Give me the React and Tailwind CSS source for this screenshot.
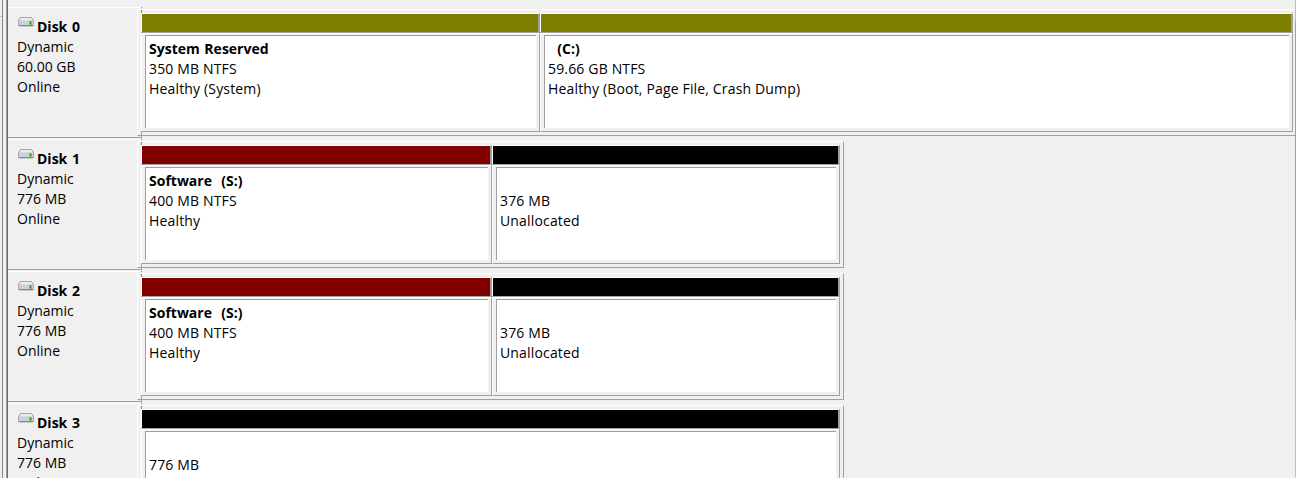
const disks = [
  { name: 'Disk 0', size: '60.00 GB', outer: 'w-[1159px]', parts: [
    { w: 'w-[399px]', bar: 'bg-[#808000]', lines: ['System Reserved', '350 MB NTFS', 'Healthy (System)'] },
    { w: 'w-[753px]', bar: 'bg-[#808000]', lines: ['\u00a0 (C:)', '59.66 GB NTFS', 'Healthy (Boot, Page File, Crash Dump)'] },
  ] },
  { name: 'Disk 1', size: '776 MB', outer: 'w-[707px]', parts: [
    { w: 'w-[351px]', bar: 'bg-[#800000]', lines: ['Software\u00a0 (S:)', '400 MB NTFS', 'Healthy'] },
    { w: 'w-[348px]', bar: 'bg-black', lines: ['', '376 MB', 'Unallocated'] },
  ] },
  { name: 'Disk 2', size: '776 MB', outer: 'w-[707px]', parts: [
    { w: 'w-[351px]', bar: 'bg-[#800000]', lines: ['Software\u00a0 (S:)', '400 MB NTFS', 'Healthy'] },
    { w: 'w-[348px]', bar: 'bg-black', lines: ['', '376 MB', 'Unallocated'] },
  ] },
  { name: 'Disk 3', size: '776 MB', outer: 'w-[707px]', parts: [
    { w: 'w-[699px]', bar: 'bg-black', lines: ['', '776 MB', ''] },
  ] },
];

function DriveIcon() {
  return (
    <svg width="16" height="10" viewBox="0 0 16 10" className="mt-[9px] shrink-0">
      <path d="M2.500 .5h11l2 3v4.500q0 1-1 1h-13q-1 0-1-1V3.500z" fill="#c6c6cb" stroke="#a6a6aa" strokeWidth="1" />
      <path d="M3 1h10l1.500 2.500h-13z" fill="#ececec" />
      <path d="M1 4h14v4H1z" fill="#d0d0d8" />
      <path d="M1 8.500h14" stroke="#85858a" />
      <path d="M11 4h3v4h-3z" fill="#7cc65a" />
      <path d="M12 5h1v2h-1z" fill="#1c9a10" />
    </svg>
  );
}

function Partition({ part }) {
  const [title, size, status] = part.lines;
  return (
    <div className={`${part.w} flex h-[119px] shrink-0 flex-col`}>
      <div className="flex h-5 flex-col border-b border-[#a0a0a0]">
        <div className={`${part.bar} flex-1 border-t border-r-2 border-l border-t-white border-r-[#a0a0a0] border-l-white`} />
      </div>
      <div className="flex flex-1 border border-t-white border-r-[#a0a0a0] border-b-[#a0a0a0] border-l-white px-[3px] pt-px pb-[3px]">
        <div className="flex-1 border-t border-l border-[#a0a0a0] bg-white pt-[3px] pl-[3px] tracking-[0.16px]">
          <div className="h-5 font-bold tracking-[0px] [word-spacing:1px]">{title}</div>
          <div className="h-5">{size}</div>
          <div className="h-5">{status}</div>
        </div>
      </div>
    </div>
  );
}

function DiskRow({ disk }) {
  return (
    <div className="relative flex h-[132px] shrink-0">
      <div className="-mr-1 h-[131px] w-[133px] shrink-0 border-t border-b border-t-white border-b-[#a0a0a0] pl-[9px]">
        <div className="mt-[9px] flex h-5">
          <div className="-mt-[9px] w-5 pl-px"><DriveIcon /></div>
          <div className="font-bold [word-spacing:1px]">{disk.name}</div>
        </div>
        <div className="h-5">Dynamic</div>
        <div className="h-5">{disk.size}</div>
        <div className="h-5">Online</div>
      </div>
      <div className={`${disk.outer} mt-[2px] flex h-[127px] shrink-0 border border-t-white border-r-[#a0a0a0] border-b-[#a0a0a0] border-l-white pt-[3px] pl-[3px]`}>
        {disk.parts.map((p, i) => <Partition key={i} part={p} />)}
      </div>
      <div className="absolute top-0 left-[133px] flex h-[6px] w-px flex-col justify-between">
        <div className="h-px bg-[#808080]" />
        <div className="h-[3px] bg-[#808080]" />
      </div>
      <div className="absolute top-[124px] left-[133px] h-[7px] w-px bg-[#a0a0a0]" />
    </div>
  );
}

export default function App() {
  return (
    <div className="flex h-[478px] w-[1296px] overflow-hidden bg-[#f0f0f0] font-['Open_Sans',sans-serif] text-[14px] leading-5 whitespace-nowrap text-black">
      <div className="w-[2px] shrink-0 bg-[#ececec]"><div className="h-4" /><div className="h-px bg-[#c0c0c0]" /></div>
      <div className="w-px shrink-0 bg-[#828790]" />
      <div className="w-[3px] shrink-0" />
      <div className="w-px shrink-0 bg-[#a0a0a0]" />
      <div className="w-px shrink-0 bg-[#696969]" />
      <div className="flex w-[1287px] shrink-0 flex-col overflow-hidden pt-[7px]">
        {disks.map((d) => <DiskRow key={d.name} disk={d} />)}
      </div>
      <div className="flex w-px shrink-0 flex-col bg-[#c0c0c0] pt-[21px]">
        <div className="h-[299px] bg-[#a0a0a0]" />
      </div>
    </div>
  );
}
